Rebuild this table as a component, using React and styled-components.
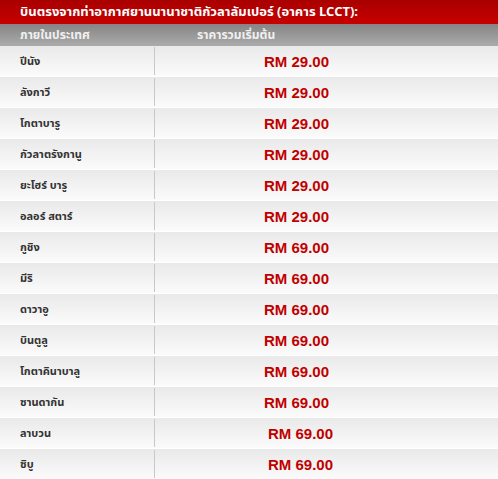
import React from 'react';
import styled, { createGlobalStyle } from 'styled-components';

const rows = [
    { city: 'ปีนัง', price: 'RM 29.00' },
    { city: 'ลังกาวี', price: 'RM 29.00' },
    { city: 'โกตาบารู', price: 'RM 29.00' },
    { city: 'กัวลาตรังกานู', price: 'RM 29.00' },
    { city: 'ยะโฮร์ บารู', price: 'RM 29.00' },
    { city: 'อลอร์ สตาร์', price: 'RM 29.00' },
    { city: 'กูชิง', price: 'RM 69.00' },
    { city: 'มีริ', price: 'RM 69.00' },
    { city: 'ดาวาอู', price: 'RM 69.00' },
    { city: 'บินตูลู', price: 'RM 69.00' },
    { city: 'โกตาคินาบาลู', price: 'RM 69.00' },
    { city: 'ซานดากัน', price: 'RM 69.00' },
    { city: 'ลาบวน', price: 'RM 69.00', shift: 4 },
    { city: 'ซิบู', price: 'RM 69.00', shift: 4 },
];

const App = () => {
    return (
        <>
            <GlobalStyle />
            <Wrapper>
                <TitleBar>บินตรงจากท่าอากาศยานนานาชาติกัวลาลัมเปอร์ (อาคาร LCCT):</TitleBar>
                <HeadRow>
                    <HeadCell>ภายในประเทศ</HeadCell>
                    <HeadCell>ราคารวมเริ่มต้น</HeadCell>
                </HeadRow>
                {rows.map((row, index) => (
                    <Row key={index}>
                        <City>{row.city}</City>
                        <Price $shift={row.shift || 0}>{row.price}</Price>
                    </Row>
                ))}
            </Wrapper>
        </>
    );
};

export default App;

const GlobalStyle = createGlobalStyle`
    html, body {
        margin: 0;
        padding: 0;
        background: #fff;
    }
`;

const Wrapper = styled.div`
    width: 498px;
    height: 479px;
    overflow: hidden;
    font-family: Tahoma, "Noto Sans Thai", "DejaVu Sans", sans-serif;
`;

const TitleBar = styled.div`
    height: 24px;
    padding-left: 20px;
    display: flex;
    align-items: center;
    background: linear-gradient(to bottom, #a80000, #c80000);
    color: #fff;
    font-size: 13px;
    font-weight: bold;
    white-space: nowrap;
`;

const HeadRow = styled.div`
    height: 22px;
    display: grid;
    grid-template-columns: 177px 1fr;
    align-items: center;
    padding-left: 20px;
    background: linear-gradient(to bottom, #858585, #ababab);
`;

const HeadCell = styled.div`
    color: #f0f0f0;
    font-size: 12px;
    font-weight: bold;
    white-space: nowrap;
`;

const Row = styled.div`
    height: 30px;
    display: grid;
    grid-template-columns: 155px 1fr;
    align-items: center;
    border-bottom: 1px solid #fff;
    background: linear-gradient(to bottom, #e9e9e9, #fbfbfb);
`;

const City = styled.div`
    height: 28px;
    display: flex;
    align-items: center;
    padding-left: 20px;
    border-right: 1px solid #c8c8c8;
    color: #333;
    font-size: 11px;
    font-weight: bold;
    white-space: nowrap;
`;

const Price = styled.div`
    padding-left: ${props => 109 + props.$shift}px;
    color: #c00000;
    font-family: "Liberation Sans", Arial, sans-serif;
    font-size: 15px;
    font-weight: bold;
    white-space: nowrap;
`;
